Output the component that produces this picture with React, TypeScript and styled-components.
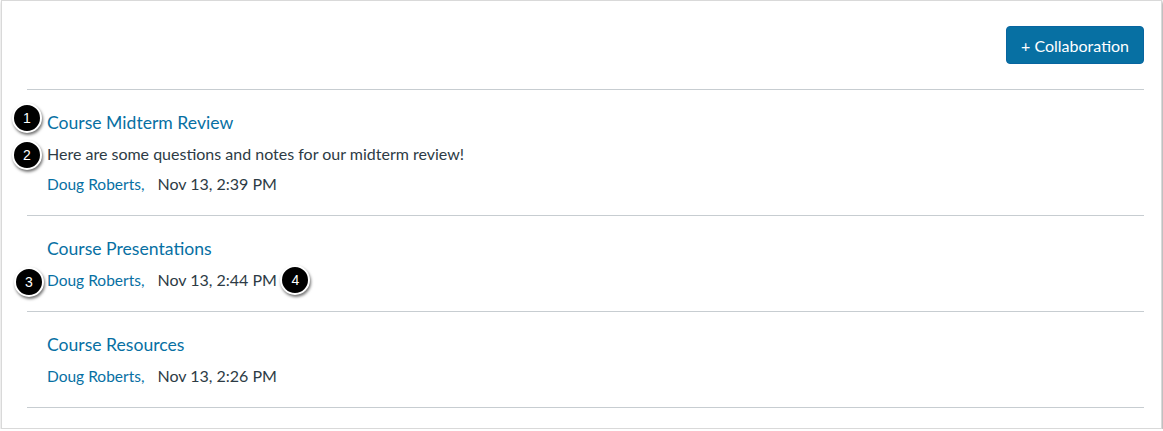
import styled, { createGlobalStyle } from 'styled-components';

const GlobalStyle = createGlobalStyle`
  body {
    margin: 0;
    background: #ffffff;
    font-family: Lato, 'Open Sans', sans-serif;
    color: #2d3b45;
  }
`;

type Collab = {
  title: string;
  desc?: string;
  author: string;
  date: string;
};

const collaborations: Collab[] = [
  {
    title: 'Course Midterm Review',
    desc: 'Here are some questions and notes for our midterm review!',
    author: 'Doug Roberts,',
    date: 'Nov 13, 2:39 PM',
  },
  { title: 'Course Presentations', author: 'Doug Roberts,', date: 'Nov 13, 2:44 PM' },
  { title: 'Course Resources', author: 'Doug Roberts,', date: 'Nov 13, 2:26 PM' },
];

export default function App() {
  return (
    <>
      <GlobalStyle />
      <Frame>
        <Header>
          <AddButton>+ Collaboration</AddButton>
        </Header>
        <List>
          {collaborations.map((c, i) => (
            <Item key={c.title}>
              <Title>
                {i === 0 && <Badge $left={-35} $top={-8}>1</Badge>}
                {c.title}
              </Title>
              {c.desc && (
                <Desc>
                  {i === 0 && <Badge $left={-35} $top={-2}>2</Badge>}
                  {c.desc}
                </Desc>
              )}
              <Meta>
                {i === 1 && <Badge $left={-33} $top={-1}>3</Badge>}
                <Author>{c.author}</Author>
                <DateText>
                  {c.date}
                  {i === 1 && <Badge $left={123} $top={-3}>4</Badge>}
                </DateText>
              </Meta>
            </Item>
          ))}
        </List>
      </Frame>
    </>
  );
}

const Frame = styled.div`
  box-sizing: border-box;
  width: 1161px;
  height: 429px;
  margin-left: 1px;
  padding: 25px 17px 20px 25px;
  border: 1px solid #d9d9d9;
  box-shadow: 1px 2px 3px rgba(0, 0, 0, 0.4);
  background: #fff;
`;

const Header = styled.div`
  display: flex;
  justify-content: flex-end;
  padding-bottom: 25px;
`;

const AddButton = styled.button`
  height: 38px;
  padding: 0 14px;
  border: 1px solid #0765a0;
  border-radius: 4px;
  background: #0770a3;
  color: #fff;
  font-family: Lato, sans-serif;
  font-size: 16px;
  cursor: pointer;
`;

const List = styled.ul`
  list-style: none;
  margin: 0;
  padding: 0;
`;

const Item = styled.li`
  position: relative;
  padding: 21px 20px 19px;
  border-top: 1px solid #c7cdd1;
  &:last-child {
    border-bottom: 1px solid #c7cdd1;
  }
`;

const Title = styled.a`
  position: relative;
  display: block;
  font-size: 17.6px;
  line-height: 24px;
  color: #0770a3;
  margin-bottom: 7px;
`;

const Desc = styled.p`
  position: relative;
  margin: 0 0 6px;
  font-size: 16px;
  line-height: 24px;
  color: #2d3b45;
`;

const Meta = styled.div`
  position: relative;
  display: flex;
  gap: 13px;
  font-size: 16px;
  line-height: 24px;
`;

const Author = styled.span`
  font-size: 15.5px;
  color: #0770a3;
`;

const DateText = styled.span`
  position: relative;
  color: #2d3b45;
`;

const Badge = styled.span<{ $left: number; $top: number }>`
  position: absolute;
  left: ${(p) => p.$left}px;
  top: ${(p) => p.$top}px;
  box-sizing: border-box;
  width: 30px;
  height: 30px;
  border-radius: 50%;
  border: 2px solid #fff;
  background: #000;
  color: #fff;
  font-family: 'Liberation Sans', Arial, sans-serif;
  font-size: 14px;
  line-height: 26px;
  text-align: center;
  box-shadow: 1px 2px 3px rgba(0, 0, 0, 0.55);
`;
